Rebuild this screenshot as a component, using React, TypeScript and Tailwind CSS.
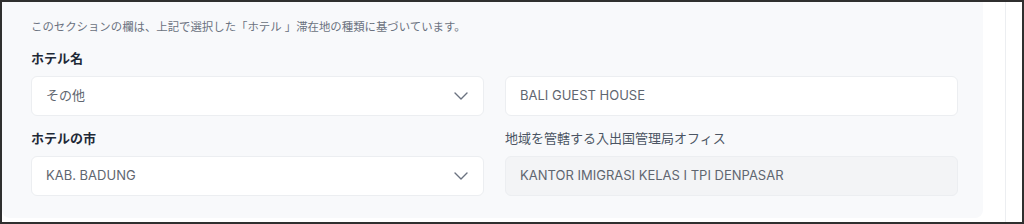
import { ChevronDown } from 'lucide-react'

const font = { fontFamily: '"Inter", "Noto Sans CJK JP", sans-serif' }

function SelectBox({ value }: { value: string }) {
  return (
    <div className="flex items-center justify-between h-10 rounded-md border border-[#eceef1] bg-white pl-3.5 pr-2.5">
      <span className="text-[13px] text-[#5f6670]">{value}</span>
      <ChevronDown className="w-6 h-6 text-[#6b7280]" strokeWidth={1.4} />
    </div>
  )
}

function TextBox({ value, disabled }: { value: string; disabled?: boolean }) {
  return (
    <div
      className={
        disabled
          ? 'flex items-center h-10 rounded-md border border-[#eceef1] bg-[#f3f4f6] px-3.5'
          : 'flex items-center h-10 rounded-md border border-[#eceef1] bg-white px-3.5'
      }
    >
      <span className="text-[13px] text-[#5f6670]">{value}</span>
    </div>
  )
}

export default function App() {
  return (
    <div style={font} className="flex w-[1024px] h-[224px] border-2 border-[#2f2f2f] bg-white overflow-hidden">
      <div className="w-[981px] h-[216px] shrink-0 bg-[#f8f9fb] rounded-b-lg pt-[17px] pl-[29px] pr-[25px]">
        <p className="text-[11.4px] leading-4 text-[#6b7280]">
          このセクションの欄は、上記で選択した「ホテル 」滞在地の種類に基づいています。
        </p>
        <div className="grid grid-cols-2 gap-x-[21px] mt-[13px]">
          <div>
            <div className="text-[13px] leading-5 font-bold text-[#1f2937]">ホテル名</div>
            <div className="mt-2">
              <SelectBox value="その他" />
            </div>
          </div>
          <div>
            <div className="h-5" />
            <div className="mt-2">
              <TextBox value="BALI GUEST HOUSE" />
            </div>
          </div>
          <div className="mt-3">
            <div className="text-[13px] leading-5 font-bold text-[#1f2937]">ホテルの市</div>
            <div className="mt-2">
              <SelectBox value="KAB. BADUNG" />
            </div>
          </div>
          <div className="mt-3">
            <div className="text-[13px] leading-5 text-[#4b5563]">地域を管轄する入出国管理局オフィス</div>
            <div className="mt-2">
              <TextBox value="KANTOR IMIGRASI KELAS I TPI DENPASAR" disabled />
            </div>
          </div>
        </div>
      </div>
      <div className="w-[22px] shrink-0" />
      <div className="w-px shrink-0 bg-[#eceef1]" />
      <div className="flex-1" />
    </div>
  )
}
